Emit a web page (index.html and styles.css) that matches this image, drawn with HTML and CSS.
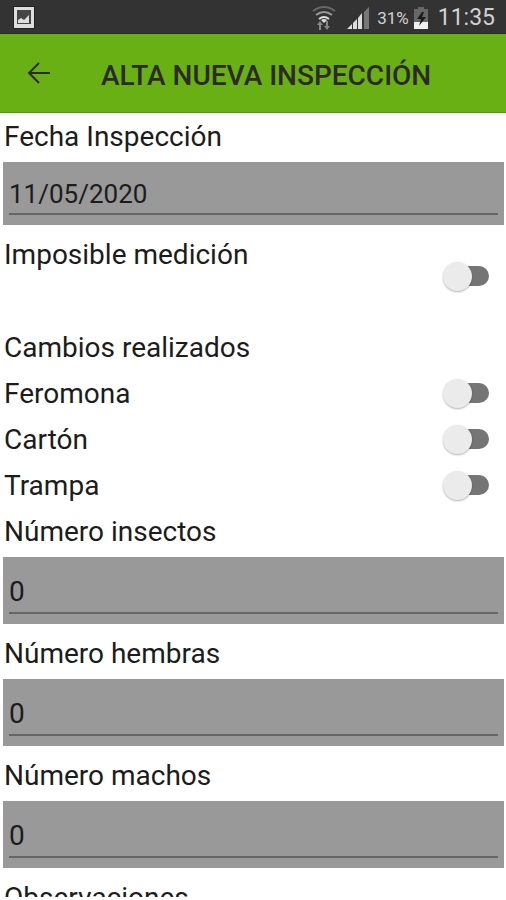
FILE: index.html
```html
<!DOCTYPE html>
<html lang="es">
<head>
<meta charset="utf-8">
<meta name="viewport" content="width=device-width, initial-scale=1">
<title>Alta nueva inspección</title>
<link rel="stylesheet" href="styles.css">
</head>
<body>
<div class="status">
  <svg class="status-picture" width="24" height="24" viewBox="0 0 24 24" aria-hidden="true">
    <path fill="#222" d="M1 0h22v23H1z"/>
    <path fill="#dedede" fill-rule="evenodd" d="M2 1h20v21H2zM5 4v14h14V4z"/>
    <path fill="#454545" d="M5 4h14v14H5z"/>
    <path fill="#dedede" d="M6 17v-3l3-2 3 2 5-5v8z"/>
  </svg>
  <div class="status-right">
    <svg width="24" height="26" viewBox="0 0 24 26" aria-hidden="true">
      <g fill="none" stroke-width="2">
        <path stroke="#666" d="M1 6Q12-2 23 6"/>
        <path stroke="#999" d="M4 10Q12 4 20 10"/>
        <path stroke="#ddd" d="M7 14q5-4 10 0"/>
      </g>
      <path fill="#ddd" d="M9 15q3-2 6 0l-3 3z"/>
      <path fill="#888" d="M8 16l3 4H9v5H7v-5H5zM15 25l-3-4h2v-5h2v5h2z"/>
    </svg>
    <svg class="status-signal" width="24" height="24" viewBox="0 0 24 24" aria-hidden="true">
      <path fill="#ddd" d="M1 23l5-5v5zM7 17l4-4v10H7zM12 12l4-5v16h-4z"/>
      <path fill="#777" d="M18 6l5-5v22h-5z"/>
    </svg>
    <span class="status-percent">31%</span>
    <svg class="status-battery" width="16" height="24" viewBox="0 0 16 24" aria-hidden="true">
      <path fill="#686868" d="M5 1h6v2h4v20H1V3h4z"/>
      <path fill="#f0f0f0" d="M1 16h14v7H1z"/>
      <path fill="#1c1c1c" d="M9 6l-5 7h4l-2 7 7-9H9l2-5z"/>
    </svg>
    <span class="status-time">11:35</span>
  </div>
</div>
<header class="bar">
  <button class="back" type="button" aria-label="Volver">
    <svg width="24" height="24" viewBox="0 0 24 24" fill="none" stroke="currentColor" stroke-width="2" aria-hidden="true">
      <path d="M24 12H3M13 2L3 12l10 10"/>
    </svg>
  </button>
  <h1 class="title">ALTA NUEVA INSPECCIÓN</h1>
</header>
<main class="content">
  <form class="form">
    <label class="label" for="fecha">Fecha Inspección</label>
    <div class="field field-date"><input class="input" id="fecha" type="text" value="11/05/2020"></div>
    <div class="row row-tall">
      <label class="label" for="imposible">Imposible medición</label>
      <input class="switch" id="imposible" type="checkbox" role="switch">
    </div>
    <h2 class="label">Cambios realizados</h2>
    <div class="row">
      <label class="label" for="feromona">Feromona</label>
      <input class="switch" id="feromona" type="checkbox" role="switch">
    </div>
    <div class="row">
      <label class="label" for="carton">Cartón</label>
      <input class="switch" id="carton" type="checkbox" role="switch">
    </div>
    <div class="row">
      <label class="label" for="trampa">Trampa</label>
      <input class="switch" id="trampa" type="checkbox" role="switch">
    </div>
    <label class="label" for="insectos">Número insectos</label>
    <div class="field"><input class="input" id="insectos" type="text" inputmode="numeric" value="0"></div>
    <label class="label" for="hembras">Número hembras</label>
    <div class="field"><input class="input" id="hembras" type="text" inputmode="numeric" value="0"></div>
    <label class="label" for="machos">Número machos</label>
    <div class="field"><input class="input" id="machos" type="text" inputmode="numeric" value="0"></div>
    <h2 class="label">Observaciones</h2>
  </form>
</main>
</body>
</html>
```

FILE: styles.css
```css
* {
  box-sizing: border-box;
}

body {
  margin: 0;
  height: 100vh;
  display: flex;
  flex-direction: column;
  overflow: hidden;
  background: #fff;
  color: #1c1c1c;
  font-family: Roboto, "Liberation Sans", sans-serif;
}

.status {
  flex: none;
  height: 34px;
  padding: 2px 11px 0 12px;
  display: flex;
  align-items: center;
  justify-content: space-between;
  background: #333;
  border-bottom: 1px solid #2b2530;
  color: #d2d2d2;
}

.status-right {
  display: flex;
  align-items: center;
}

.status-signal {
  margin-left: 10px;
}

.status-percent {
  margin-left: 7px;
  font-size: 17px;
}

.status-battery {
  margin: 0 9px 0 4px;
}

.status-time {
  font-size: 23px;
}

.bar {
  flex: none;
  height: 79px;
  padding: 0 26px;
  display: flex;
  align-items: center;
  gap: 51px;
  background: #69b015;
  border-bottom: 1px solid #4d9a12;
  color: #2d2a26;
}

.back {
  display: flex;
  padding: 0;
  border: 0;
  background: none;
  color: inherit;
}

.title {
  margin: 0;
  padding-top: 4px;
  font-size: 28px;
  font-weight: 500;
  white-space: nowrap;
}

.content {
  flex: 1;
  min-height: 0;
  margin-bottom: 3px;
  overflow: hidden;
}

.label {
  display: block;
  margin: 0;
  padding: 2px 0 0 4px;
  font-size: 28px;
  font-weight: 400;
  line-height: 44px;
}

.field {
  height: 67px;
  margin: 3px 2px 6px 3px;
  padding: 10px 6px;
  background: #999;
}

.field-date {
  height: 63px;
}

.input {
  display: block;
  width: 100%;
  height: 100%;
  padding: 4px 0 0;
  border: 0;
  border-bottom: 2px solid #666;
  border-radius: 0;
  outline: 0;
  background: none;
  color: #1c1c1c;
  font: 28px Roboto, "Liberation Sans", sans-serif;
}

.field-date .input {
  padding-top: 2px;
  font-size: 26px;
}

.row {
  display: flex;
  align-items: center;
  justify-content: space-between;
  padding-right: 17px;
}

.row-tall {
  height: 93px;
  padding-bottom: 3px;
}

.row-tall .label {
  align-self: flex-start;
}

.switch {
  appearance: none;
  display: flex;
  align-items: center;
  width: 38px;
  height: 20px;
  margin: 0 0 0 8px;
  border-radius: 10px;
  background: #757575;
}

.switch::before {
  content: "";
  flex: none;
  width: 29px;
  height: 29px;
  margin-left: -8px;
  border-radius: 50%;
  background: #ebebeb;
  box-shadow: 0 1px 2px rgba(0, 0, 0, 0.3);
}

.switch:checked {
  justify-content: flex-end;
}
```
